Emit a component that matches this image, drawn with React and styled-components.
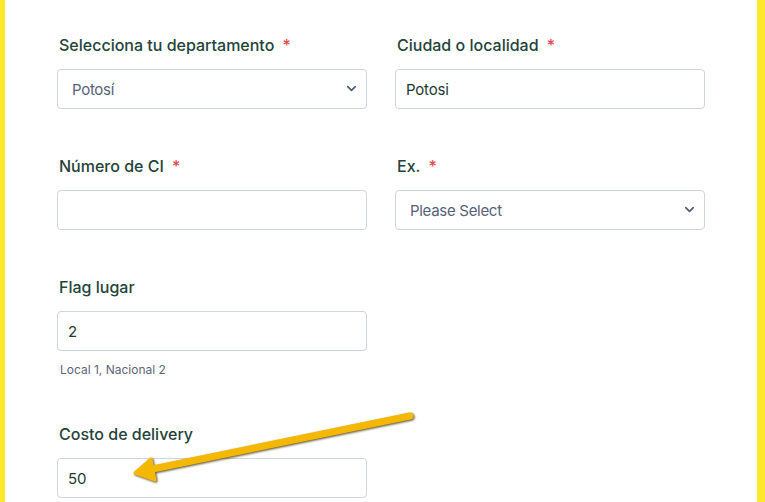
import React from "react";
import styled, { createGlobalStyle } from "styled-components";
import { ChevronDown } from "lucide-react";

const GlobalStyle = createGlobalStyle`
  html, body {
    margin: 0;
    padding: 0;
    height: 100%;
    overflow: hidden;
    background: #fde92b;
  }
  #root {
    height: 100%;
  }
`;

export default function App() {
  return (
    <>
      <GlobalStyle />
      <Page>
        <Panel>
          <FormGrid>
            <Field>
              <Label>Selecciona tu departamento <Req>*</Req></Label>
              <SelectWrap>
                <Select defaultValue="Potosí" $muted>
                  <option>Potosí</option>
                  <option>La Paz</option>
                  <option>Cochabamba</option>
                </Select>
                <Chevron><ChevronDown size={15} strokeWidth={2.6} /></Chevron>
              </SelectWrap>
            </Field>
            <Field>
              <Label>Ciudad o localidad <Req>*</Req></Label>
              <Input defaultValue="Potosi" />
            </Field>

            <Field>
              <Label>Número de CI <Req>*</Req></Label>
              <Input defaultValue="" />
            </Field>
            <Field>
              <Label>Ex. <Req>*</Req></Label>
              <SelectWrap>
                <Select defaultValue="" $muted>
                  <option value="">Please Select</option>
                  <option>LP</option>
                  <option>PT</option>
                </Select>
                <Chevron><ChevronDown size={15} strokeWidth={2.6} /></Chevron>
              </SelectWrap>
            </Field>

            <Field>
              <Label>Flag lugar</Label>
              <Input defaultValue="2" />
              <Hint>Local 1, Nacional 2</Hint>
            </Field>
            <div />

            <Field>
              <Label>Costo de delivery</Label>
              <Input defaultValue="50" />
            </Field>
          </FormGrid>

          <Arrow viewBox="0 0 765 502" width="765" height="502">
            <line x1="410" y1="416" x2="148" y2="470" />
            <polygon points="135,473 151,459 155,480" />
          </Arrow>
        </Panel>
      </Page>
    </>
  );
}

const Page = styled.div`
  height: 100%;
  display: flex;
  padding: 0 8px 0 5px;
  box-sizing: border-box;
`;

const Panel = styled.div`
  position: relative;
  flex: 1;
  background: #ffffff;
  padding: 35px 0 0 52px;
`;

const FormGrid = styled.div`
  display: grid;
  grid-template-columns: 310px 310px;
  column-gap: 28px;
  row-gap: 47px;
`;

const Field = styled.div`
  display: flex;
  flex-direction: column;
`;

const Label = styled.label`
  font-family: "Inter", "Liberation Sans", sans-serif;
  font-size: 16px;
  font-weight: 500;
  line-height: 20px;
  color: #24433a;
  padding-left: 2px;
  margin-bottom: 14px;
`;

const Req = styled.span`
  color: #e5484d;
  margin-left: 4px;
`;

const Input = styled.input`
  box-sizing: border-box;
  width: 100%;
  height: 40px;
  border: 1px solid #d0d4dc;
  border-radius: 4px;
  padding: 0 10px;
  font-family: "Inter", "Liberation Sans", sans-serif;
  font-size: 15px;
  letter-spacing: -0.2px;
  color: #1e3a30;
  background: #fff;
  outline: none;
`;

const SelectWrap = styled.div`
  position: relative;
`;

const Select = styled.select`
  box-sizing: border-box;
  width: 100%;
  height: 40px;
  border: 1px solid #d0d4dc;
  border-radius: 4px;
  padding: 0 14px;
  font-family: "Inter", "Liberation Sans", sans-serif;
  font-size: 15px;
  letter-spacing: -0.3px;
  color: ${(p) => (p.$muted ? "#57627a" : "#1e3a30")};
  background: #fff;
  appearance: none;
  outline: none;
`;

const Chevron = styled.span`
  position: absolute;
  right: 8px;
  top: 12px;
  display: flex;
  color: #4e5a70;
  pointer-events: none;
`;

const Hint = styled.div`
  font-family: "Inter", "Liberation Sans", sans-serif;
  font-size: 12px;
  color: #5d6678;
  margin-top: 11px;
  padding-left: 3px;
`;

const Arrow = styled.svg`
  position: absolute;
  left: -5px;
  top: 0;
  pointer-events: none;
  filter: drop-shadow(1.5px 1.5px 1px rgba(60, 45, 0, 0.85));

  line {
    stroke: #f5b800;
    stroke-width: 7;
    stroke-linecap: round;
  }
  polygon {
    fill: #f5b800;
    stroke: #f5b800;
    stroke-width: 3;
    stroke-linejoin: round;
  }
`;
